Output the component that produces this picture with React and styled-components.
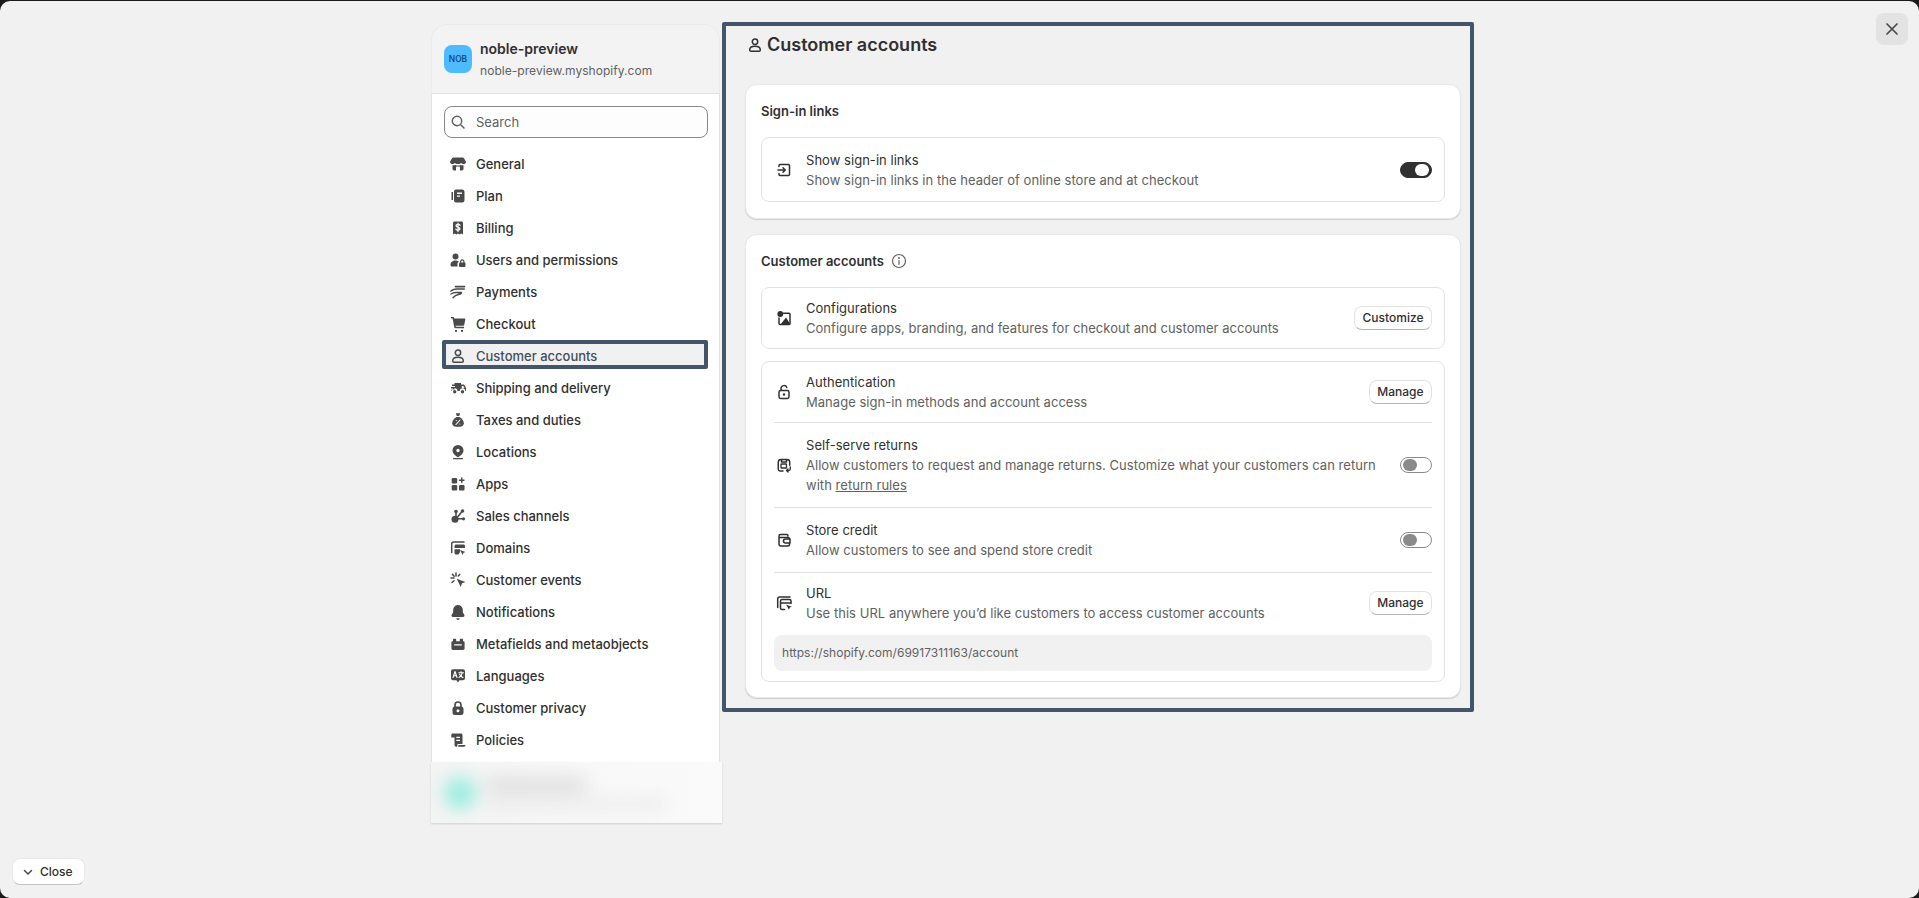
import React from "react";
import styled, { createGlobalStyle } from "styled-components";

const Global = createGlobalStyle`
  html, body { margin: 0; padding: 0; height: 100%; background: #1a1a1a; overflow: hidden; }
  body { font-family: Inter, "Noto Sans", "Liberation Sans", sans-serif; font-size: 13px; line-height: 20px; color: #303030; -webkit-font-smoothing: auto; }
  *, *::before, *::after { box-sizing: border-box; }
`;

const Frame = styled.div`
  position: relative;
  margin-top: 1px;
  height: 897px;
  background: #f1f1f1;
  border-radius: 10px;
  display: flex;
  align-items: flex-start;
  padding: 21px 0 0 431px;
  overflow: hidden;
`;

const Sidebar = styled.aside`
  width: 291px;
  margin-top: 2px;
  flex: none;
`;
const SideHeader = styled.header`
  height: 70px;
  background: #f3f3f3;
  border: 1px solid #ebebeb;
  border-bottom: 1px solid #e3e3e3;
  border-radius: 16px 16px 0 0;
  margin-right: 2px;
  display: flex;
  align-items: center;
  gap: 8px;
  padding: 0 0 0 12px;
`;
const Avatar = styled.div`
  width: 28px;
  height: 28px;
  border-radius: 8px;
  background: #4cbbff;
  color: #0c3d66;
  font-size: 8.4px;
  font-weight: 500;
  display: flex;
  align-items: center;
  justify-content: center;
`;
const StoreInfo = styled.div`
  margin-top: 2px;
`;
const StoreName = styled.div`
  font-size: 14px;
  font-weight: 600;
  line-height: 20px;
  color: #303030;
`;
const StoreUrl = styled.div`
  font-size: 12px;
  letter-spacing: 0.05px;
  color: #616161;
  line-height: 20px;
  margin-top: 2px;
`;
const SideBody = styled.div`
  background: #fff;
  margin-right: 2px;
  border-left: 1px solid #e3e3e3;
  border-right: 1px solid #e3e3e3;
  padding: 12px 12px 6px 12px;
  height: 668px;
`;
const SearchBox = styled.div`
  height: 32px;
  width: 264px;
  border: 1px solid #8a8a8a;
  border-radius: 8px;
  background: #fdfdfd;
  display: flex;
  align-items: center;
  gap: 8px;
  padding-left: 3px;
  color: #616161;
  margin-bottom: 10px;
`;
const NavList = styled.nav`
  display: flex;
  flex-direction: column;
`;
const NavRow = styled.div`
  position: relative;
  height: 32px;
  display: flex;
  align-items: center;
  gap: 8px;
  padding-left: 4px;
  font-weight: 500;
  color: ${(p) => (p.$active ? "#454f5b" : "#303030")};
  & > * { position: relative; z-index: 1; }
  ${(p) =>
    p.$active &&
    `&::before {
      content: "";
      position: absolute;
      left: -2px;
      right: -1px;
      top: 0;
      height: 29px;
      background: #f1f1f1;
      border: 4px solid #44546a;
      border-radius: 2px;
    }`}
`;
const IconWrap = styled.span`
  width: 20px;
  height: 20px;
  flex: none;
  display: block;
  color: ${(p) => p.$color || "#4a4a4a"};
  svg { display: block; width: 20px; height: 20px; }
`;
const BlurArea = styled.div`
  height: 61px;
  background: linear-gradient(90deg, #f4f4f4, #f8f8f8 45%, #fafafa);
  box-shadow: 0 1px 2px rgba(0, 0, 0, 0.14);
  overflow: hidden;
`;
const BlurInner = styled.div`
  display: flex;
  align-items: center;
  gap: 10px;
  height: 100%;
  padding-left: 13px;
  filter: blur(9px);
`;
const BlurDot = styled.div`
  width: 32px;
  height: 32px;
  border-radius: 50%;
  background: #98ecdf;
`;
const BlurLines = styled.div`
  display: flex;
  flex-direction: column;
  gap: 8px;
`;
const BlurLine = styled.div`
  height: ${(p) => p.$h}px;
  width: ${(p) => p.$w}px;
  background: ${(p) => p.$c};
`;

const Main = styled.main`
  width: 752px;
  flex: none;
  border: 4px solid #44546a;
  border-radius: 2px;
  padding: 7px 9px 10px 19px;
`;
const Heading = styled.h1`
  margin: 0 0 27px;
  height: 24px;
  display: flex;
  align-items: center;
  gap: 2px;
  font-size: 18px;
  font-weight: 600;
  color: #303030;
`;
const Card = styled.section`
  background: #fff;
  border: 1px solid #e8e8e8;
  border-radius: 12px;
  box-shadow: 0 1px 1px rgba(0, 0, 0, 0.14);
  padding: 16px 15px 15px;
  display: flex;
  flex-direction: column;
  gap: 12px;
  & + & { margin-top: 15px; }
`;
const CardFirstPad = styled(Card)`
  padding-bottom: 16px;
`;
const CardTitle = styled.h2`
  margin: 0 0 4px;
  height: 20px;
  display: flex;
  align-items: center;
  gap: 5px;
  font-size: 13px;
  font-weight: 600;
  color: #303030;
`;
const Box = styled.div`
  border: 1px solid #e3e3e3;
  border-radius: 8px;
  padding: 0 12px;
`;
const Row = styled.div`
  display: flex;
  align-items: center;
  gap: 12px;
  padding: ${(p) => p.$pt}px 0 ${(p) => p.$pb}px;
  border-bottom: ${(p) => (p.$line ? "1px solid #e3e3e3" : "none")};
`;
const RowText = styled.div`
  flex: 1;
  min-width: 0;
  letter-spacing: 0.035px;
`;
const RowTitle = styled.div`
  color: #303030;
`;
const RowDesc = styled.div`
  color: #616161;
  max-width: 580px;
`;
const TextLink = styled.a`
  color: #616161;
  text-decoration: underline;
`;
const Button = styled.button`
  font: inherit;
  height: 24px;
  padding: 0 7.5px;
  font-size: 12px;
  font-weight: 550;
  color: #303030;
  background: #fff;
  border: 1px solid #e3e3e3;
  border-bottom-color: #b5b5b5;
  border-radius: 8px;
  flex: none;
`;
const Toggle = styled.span`
  width: 32px;
  height: 16px;
  border-radius: 8px;
  flex: none;
  display: flex;
  align-items: center;
  padding: 1px 2px;
  justify-content: ${(p) => (p.$on ? "flex-end" : "flex-start")};
  background: ${(p) => (p.$on ? "#303030" : "#fff")};
  border: 1px solid ${(p) => (p.$on ? "#303030" : "#8a8a8a")};
  &::after {
    content: "";
    width: 14px;
    height: 12px;
    border-radius: 6px;
    background: ${(p) => (p.$on ? "#fff" : "#8a8a8a")};
  }
`;
const CodeBox = styled.div`
  height: 36px;
  margin-bottom: 10px;
  background: #f1f1f1;
  border-radius: 8px;
  padding: 0 8px;
  display: flex;
  align-items: center;
  color: #616161;
  font-size: 12px;
  letter-spacing: 0.03px;
`;
const CloseButton = styled.button`
  position: absolute;
  left: 12px;
  top: 857px;
  height: 27px;
  width: 73px;
  font: inherit;
  font-size: 12px;
  font-weight: 450;
  color: #303030;
  background: #fff;
  border: 1px solid #e8e8e8;
  border-bottom-color: #c4c4c4;
  border-radius: 8px;
  display: flex;
  align-items: center;
  gap: 2px;
  padding: 0 0 0 5px;
`;
const DismissButton = styled.button`
  position: absolute;
  left: 1876px;
  top: 12px;
  width: 32px;
  height: 32px;
  border: none;
  border-radius: 8px;
  background: #e3e3e3;
  color: #4a4a4a;
  padding: 6px;
`;

const S = ({ children }) => (
  <svg viewBox="0 0 20 20" fill="currentColor" fillRule="evenodd">
    {children}
  </svg>
);
const L = ({ d, w = 1.5, c = "currentColor" }) => (
  <path d={d} fill="none" stroke={c} strokeWidth={w} strokeLinecap="round" strokeLinejoin="round" />
);

const icons = {
  store: (
    <S>
      <path d="M5.400 3.500h9.200c.6 0 1.100.3 1.400.8l2 3.500c0 1.400-1.200 2.300-2.600 2.300-1 0-1.800-.4-2.300-1-.6.6-1.600 1-3.100 1-1.500 0-2.500-.4-3.100-1-.5.6-1.300 1-2.300 1-1.400 0-2.600-.9-2.600-2.300l2-3.500c.3-.5.8-.8 1.400-.8z" />
      <path d="M4.500 11.200v3.600c0 .9.700 1.700 1.600 1.700h1.900v-3a1 1 0 0 1 1-1h2a1 1 0 0 1 1 1v3h1.900c.9 0 1.600-.8 1.600-1.700v-3.600c-.9.3-1.900.2-2.800-.2-.9.4-1.900.6-2.700.6s-1.800-.2-2.700-.6c-.9.4-1.900.5-2.800.2z" />
    </S>
  ),
  plan: (
    <S>
      <path d="M3.500 6h1.500v8h-1.500z" />
      <path d="M8 3.500h6a2.500 2.500 0 0 1 2.500 2.500v8a2.500 2.500 0 0 1-2.500 2.500h-6a2 2 0 0 1-2-2v-9a2 2 0 0 1 2-2zM9 6.500v1.500h5v-1.500zM9 9.500v1.300h3v-1.300z" />
    </S>
  ),
  billing: (
    <S>
      <path d="M6.500 3.500h7c.9 0 1.500.6 1.500 1.500v11.500l-1.700-1-1.700 1-1.600-1-1.600 1-1.700-1-1.700 1v-11.500c0-.9.600-1.500 1.500-1.500z" />
      <L c="#fff" w={1.3} d="M12 7.300c-.3-.7-1-.9-2-.9-1.200 0-2 .5-2 1.400 0 2 4 1 4 3 0 .9-.9 1.400-2 1.400s-1.800-.3-2.100-1M10 5.200v8.300" />
    </S>
  ),
  users: (
    <S>
      <circle cx="7.500" cy="6.500" r="3" />
      <path d="M2.500 15c0-2.800 2.200-4.500 5-4.500 1.300 0 2.400.3 3.300 1-.8.6-1.300 1.500-1.300 2.700v2.300h-5.500c-.9 0-1.500-.6-1.500-1.500z" />
      <rect x="11" y="12.500" width="6.500" height="4.500" rx="1" />
      <L w={1.2} d="M12.700 12.500v-1a1.600 1.600 0 0 1 3.200 0v1" />
    </S>
  ),
  payments: (
    <S>
      <L w={1.7} d="M7.500 4.600h9" />
      <L w={1.4} d="M2.800 9c2-1.500 3.500-2 6-2h7.500" />
      <L w={1.4} d="M3 12c1.500-1 3-1.500 5-1.500h5.500c-.3 1.300-1.500 1.800-3 1.800" />
      <L w={1.4} d="M5 15.800c1.500-1.800 3-2.800 5.500-3.300" />
    </S>
  ),
  cart: (
    <S>
      <path d="M3 3h2.200c.4 0 .8.300.9.700l.2.800h10.200c.5 0 .9.500.8 1l-1.100 5.500c-.1.500-.5.800-1 .8H7.600l.2 1h8.200v1.500H7.300c-.5 0-.9-.3-1-.8L4.600 4.500H3z" />
      <rect x="7" y="16" width="2" height="1.800" />
      <rect x="13" y="16" width="2" height="1.800" />
    </S>
  ),
  person: (
    <S>
      <L d="M12.700 6.700a2.700 2.700 0 1 1-5.400 0 2.700 2.700 0 0 1 5.400 0z" />
      <L d="M4.700 14.900c0-2.300 2.200-3.600 5.300-3.600s5.300 1.300 5.300 3.600c0 .8-.6 1.300-1.300 1.300h-8c-.7 0-1.300-.5-1.300-1.300z" />
    </S>
  ),
  truck: (
    <S>
      <path d="M6.500 5h6.500v1.500h2.500c.4 0 .7.200.9.500l1.600 2.700v3.300h-.8a2.700 2.700 0 0 0-5.400 0H9.400a2.700 2.700 0 0 0-5.400 0h-.5v-1.500h3v-1h-3.500V9h4V8h-3V6.500h2.500zM13.800 8v2h2.700l-1.200-2z" />
      <circle cx="6.700" cy="13.800" r="1.700" />
      <circle cx="14.500" cy="13.800" r="1.700" />
    </S>
  ),
  bag: (
    <S>
      <path d="M7.800 3.200h4.400l-1 2.800H8.800z" />
      <path d="M8.500 7h3c2.500 1.500 4.300 4 4.300 6.300 0 2-1.700 3.500-3.800 3.500H8c-2.100 0-3.800-1.500-3.800-3.500C4.200 11 6 8.500 8.500 7z" />
      <L c="#fff" w={1.1} d="M8 14.500l4-4.500M8.200 10.600h.1M11.800 14h.1" />
    </S>
  ),
  pin: (
    <S>
      <path d="M10 3a5.500 5.500 0 0 0-5.500 5.500c0 2.900 3 5.300 5.500 6.800 2.500-1.500 5.500-3.900 5.500-6.800A5.500 5.500 0 0 0 10 3zm0 3.800a1.700 1.700 0 1 1 0 3.400 1.700 1.700 0 0 1 0-3.400z" />
      <rect x="5" y="16" width="10" height="1.300" rx=".6" />
    </S>
  ),
  apps: (
    <S>
      <rect x="3.700" y="4" width="5.500" height="5.500" rx="1.200" />
      <rect x="3.700" y="11" width="5.500" height="5.500" rx="1.200" />
      <rect x="11" y="11" width="5.500" height="5.500" rx="1.200" />
      <L w={1.4} d="M13.800 4v4.500M11.500 6.200h4.500" />
    </S>
  ),
  channels: (
    <S>
      <circle cx="7" cy="13.300" r="3.500" />
      <circle cx="8" cy="5.500" r="1.800" />
      <circle cx="14.500" cy="5" r="1.800" />
      <circle cx="15.500" cy="12.800" r="1.600" />
      <L w={1.6} d="M8 6v5M14 5.500l-6 7.500M8 12.800h7" />
    </S>
  ),
  domains: (
    <S>
      <L d="M3.700 14.500v-8.500c0-1.200.8-2 2-2h10.300" />
      <path d="M8 6.500h7.500c.8 0 1.500.7 1.500 1.500v2h-10.500v-2c0-.8.700-1.500 1.500-1.500z" />
      <path d="M6.500 11.300h5.500v3l-1.500 2.200h-2.500c-.8 0-1.500-.7-1.500-1.500z" />
      <path d="M12 12l5.500 2-2 .8-.9 2.200z" />
    </S>
  ),
  events: (
    <S>
      <path d="M8.700 8.700l8.800 3.300-3.500 1.300-1.300 3.700z" />
      <L w={1.5} d="M8 3v3M3 8h3M4.400 4.400l1.800 1.800M11.700 4.400l-1.500 1.600M4 12.500l2-1.700" />
    </S>
  ),
  bell: (
    <S>
      <path d="M10 3a4.800 4.800 0 0 0-4.800 4.800v2c0 1.300-1.700 2.500-1.700 3.800 0 .8.500 1.300 1.300 1.300h10.400c.8 0 1.300-.5 1.300-1.300 0-1.300-1.700-2.500-1.700-3.800v-2A4.800 4.800 0 0 0 10 3z" />
      <path d="M8.300 16.200h3.400a1.700 1.700 0 0 1-3.400 0z" />
    </S>
  ),
  meta: (
    <S>
      <path d="M6 4.800h1.500c.4 0 .7.300.7.700v1.700h3.600v-1.700c0-.4.300-.7.700-.7H14c.6 0 1 .4 1 1v1.400h.5c.6 0 1.100.5 1.100 1.100v6c0 1-.7 1.700-1.700 1.700h-9.800c-1 0-1.700-.7-1.700-1.700v-6c0-.6.500-1.100 1.100-1.100H5v-1.400c0-.6.400-1 1-1zM6.200 10.200v1.300h7.600v-1.300z" />
    </S>
  ),
  lang: (
    <S>
      <path d="M5 3.200h10a2 2 0 0 1 2 2v7a2 2 0 0 1-2 2h-3.500l-1.500 2.300-1.500-2.300H5a2 2 0 0 1-2-2v-7a2 2 0 0 1 2-2z" />
      <L c="#fff" w={1.1} d="M5 11.500l2-6 2 6M5.700 9.800h2.600M10.800 6.800h4.700M13 5.500v1.300M14.300 6.800c-.3 2.300-1.600 3.900-3.300 4.700M11.600 8.200c.6 1.500 1.800 2.700 3.400 3.300" />
    </S>
  ),
  lock: (
    <S>
      <L w={1.7} d="M7 9V7a3 3 0 0 1 6 0v2" />
      <path d="M7 8.500h6a2.500 2.500 0 0 1 2.500 2.500v3.500a2.500 2.500 0 0 1-2.500 2.500H7a2.500 2.500 0 0 1-2.500-2.500V11A2.500 2.500 0 0 1 7 8.500zm3 2.700a1.500 1.500 0 1 0 0 3 1.500 1.500 0 0 0 0-3z" />
    </S>
  ),
  policy: (
    <S>
      <path d="M4.500 3.500h8.500c.8 0 1.500.7 1.500 1.500v9h-5v1.500c0 .5-.3 1-.8 1.300-1.200 0-2.200-.6-2.200-1.800V7.500H3.300V5c0-.8.500-1.500 1.200-1.500zM8.300 6.700v1.200h3.700V6.700zM8.300 9.700v1.200h3.700V9.700z" />
      <path d="M10.500 15h7c0 1-.6 1.700-1.500 1.700h-6c.3-.5.500-1 .5-1.700z" />
    </S>
  ),
  search: (
    <S>
      <L d="M13.700 9a4.700 4.700 0 1 1-9.400 0 4.700 4.700 0 0 1 9.400 0zM12.500 12.500l3.500 3.500" />
    </S>
  ),
  signin: (
    <S>
      <L d="M5 6.500v-1c0-.7.500-1 1-1h8.500c.6 0 1 .4 1 1v9c0 .6-.4 1-1 1H6c-.5 0-1-.3-1-1v-1M4 10h7M9 7.800l2.300 2.200L9 12.200" />
    </S>
  ),
  config: (
    <S>
      <circle cx="6.300" cy="6" r="2.900" />
      <L w={1.5} d="M9.500 5.200h5.500c.6 0 1 .4 1 1v9.300c0 .6-.4 1-1 1H6c-.6 0-1-.4-1-1v-5.500" />
      <path d="M6.500 16.500l5.500-7 4.500 7z" />
    </S>
  ),
  unlock: (
    <S>
      <L d="M7 8.500V6.500a3 3 0 0 1 5.800-1M6.700 8.500h6.600c.9 0 1.700.8 1.700 1.700v4.600c0 .9-.8 1.700-1.700 1.700H6.700c-.9 0-1.700-.8-1.700-1.700v-4.600c0-.9.800-1.700 1.700-1.700z" />
      <circle cx="10" cy="12.500" r="1.200" />
    </S>
  ),
  returns: (
    <S>
      <L d="M9 16H6c-1 0-1.700-.7-1.700-1.700V7.200c0-1.500 1-2.700 2.500-2.700h6.400c1.500 0 2.500 1.200 2.500 2.700v3M7.500 4.500v2.500h5V4.500" />
      <rect x="7" y="9" width="5.500" height="4" rx=".6" fill="none" stroke="currentColor" strokeWidth="1.300" />
      <L w={1.3} d="M16.300 12v2c0 1-.6 1.500-1.500 1.500h-2.300M14 14l-1.500 1.500 1.500 1.500" />
    </S>
  ),
  wallet: (
    <S>
      <L d="M14 6v-.3c0-.7-.5-1.200-1.200-1.200H6.500c-1 0-1.500.8-1.500 1.500v8c0 1 .7 2 2 2h7c1 0 1.500-.7 1.500-1.500V13M5 6.500c0 .8.600 1 1.300 1H14c.8 0 1.500.5 1.500 1.300" />
      <L d="M11.500 9h4.500v4h-4.500a2 2 0 0 1 0-4z" />
    </S>
  ),
  url: (
    <S>
      <L d="M3.700 14.500v-8.500c0-1.200.8-2 2-2h10.300M8 6.500h7.500c.8 0 1.500.7 1.500 1.500v2.500M6.500 10h10M10.500 16.500h-2.500c-.8 0-1.500-.7-1.500-1.500v-7c0-.8.700-1.500 1.500-1.500" />
      <path d="M12.300 11.800l5.500 2-2 .8-.9 2.200z" />
    </S>
  ),
  info: (
    <S>
      <L w={1.2} d="M16.500 10a6.500 6.500 0 1 1-13 0 6.500 6.500 0 0 1 13 0zM10 9.500v3.800" />
      <circle cx="10" cy="7" r=".9" />
    </S>
  ),
  chevron: (
    <S>
      <L d="M6.500 8.500L10 12l3.500-3.500" />
    </S>
  ),
  close: (
    <S>
      <L w={1.7} d="M5 5l10 10M15 5L5 15" />
    </S>
  ),
};

const Icon = ({ name, color }) => <IconWrap $color={color}>{icons[name]}</IconWrap>;

const nav = [
  ["store", "General"],
  ["plan", "Plan"],
  ["billing", "Billing"],
  ["users", "Users and permissions"],
  ["payments", "Payments"],
  ["cart", "Checkout"],
  ["person", "Customer accounts", true],
  ["truck", "Shipping and delivery"],
  ["bag", "Taxes and duties"],
  ["pin", "Locations"],
  ["apps", "Apps"],
  ["channels", "Sales channels"],
  ["domains", "Domains"],
  ["events", "Customer events"],
  ["bell", "Notifications"],
  ["meta", "Metafields and metaobjects"],
  ["lang", "Languages"],
  ["lock", "Customer privacy"],
  ["policy", "Policies"],
];

export default function App() {
  return (
    <>
      <Global />
      <Frame>
        <Sidebar>
          <SideHeader>
            <Avatar>NOB</Avatar>
            <StoreInfo>
              <StoreName>noble-preview</StoreName>
              <StoreUrl>noble-preview.myshopify.com</StoreUrl>
            </StoreInfo>
          </SideHeader>
          <SideBody>
            <SearchBox>
              <Icon name="search" color="#616161" />
              Search
            </SearchBox>
            <NavList>
              {nav.map(([icon, label, active]) => (
                <NavRow key={label} $active={active}>
                  <Icon name={icon} />
                  <span>{label}</span>
                </NavRow>
              ))}
            </NavList>
          </SideBody>
          <BlurArea>
            <BlurInner>
              <BlurDot />
              <BlurLines>
                <BlurLine $w={100} $h={14} $c="#dcdcdc" />
                <BlurLine $w={180} $h={8} $c="#e6e6e6" />
              </BlurLines>
            </BlurInner>
          </BlurArea>
        </Sidebar>
        <Main>
          <Heading>
            <Icon name="person" color="#303030" />
            Customer accounts
          </Heading>
          <CardFirstPad>
            <CardTitle>Sign-in links</CardTitle>
            <Box>
              <Row $pt={12} $pb={11}>
                <Icon name="signin" color="#303030" />
                <RowText>
                  <RowTitle>Show sign-in links</RowTitle>
                  <RowDesc>Show sign-in links in the header of online store and at checkout</RowDesc>
                </RowText>
                <Toggle $on />
              </Row>
            </Box>
          </CardFirstPad>
          <Card>
            <CardTitle>
              Customer accounts
              <Icon name="info" color="#616161" />
            </CardTitle>
            <Box>
              <Row $pt={10} $pb={10}>
                <Icon name="config" color="#303030" />
                <RowText>
                  <RowTitle>Configurations</RowTitle>
                  <RowDesc>Configure apps, branding, and features for checkout and customer accounts</RowDesc>
                </RowText>
                <Button>Customize</Button>
              </Row>
            </Box>
            <Box>
              <Row $pt={10} $pb={10} $line>
                <Icon name="unlock" color="#303030" />
                <RowText>
                  <RowTitle>Authentication</RowTitle>
                  <RowDesc>Manage sign-in methods and account access</RowDesc>
                </RowText>
                <Button>Manage</Button>
              </Row>
              <Row $pt={12} $pb={12} $line>
                <Icon name="returns" color="#303030" />
                <RowText>
                  <RowTitle>Self-serve returns</RowTitle>
                  <RowDesc>
                    Allow customers to request and manage returns. Customize what your customers can return with{" "}
                    <TextLink>return rules</TextLink>
                  </RowDesc>
                </RowText>
                <Toggle />
              </Row>
              <Row $pt={12} $pb={12} $line>
                <Icon name="wallet" color="#303030" />
                <RowText>
                  <RowTitle>Store credit</RowTitle>
                  <RowDesc>Allow customers to see and spend store credit</RowDesc>
                </RowText>
                <Toggle />
              </Row>
              <Row $pt={10} $pb={12}>
                <Icon name="url" color="#303030" />
                <RowText>
                  <RowTitle>URL</RowTitle>
                  <RowDesc>Use this URL anywhere you’d like customers to access customer accounts</RowDesc>
                </RowText>
                <Button>Manage</Button>
              </Row>
              <CodeBox>https://shopify.com/69917311163/account</CodeBox>
            </Box>
          </Card>
        </Main>
        <CloseButton>
          <Icon name="chevron" />
          Close
        </CloseButton>
        <DismissButton>
          <Icon name="close" />
        </DismissButton>
      </Frame>
    </>
  );
}
